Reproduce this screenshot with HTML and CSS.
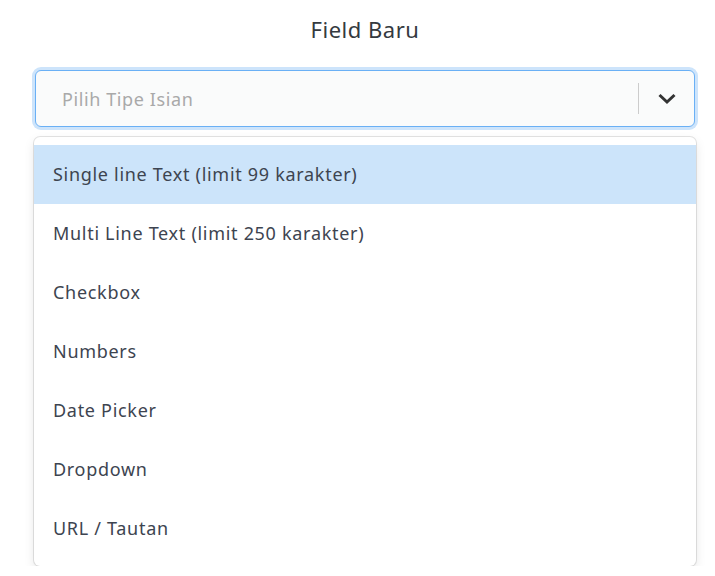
FILE: index.html
```html
<!DOCTYPE html>
<html lang="en">
  <head>
    <meta charset="UTF-8" />
    <meta name="viewport" content="width=device-width, initial-scale=1.0" />
    <title>Field Baru</title>
    <link rel="stylesheet" href="styles.css">
  </head>
  <body>
    <div class="field-form">
      <h1>Field Baru</h1>

      <div class="select-control">
        <div class="select-value">Pilih Tipe Isian</div>
        <span class="select-separator"></span>
        <div class="select-indicator">
          <svg width="20" height="20" viewBox="0 0 20 20">
            <path d="M2.5 6 L10 13 L17.5 6" fill="none" stroke="#333" stroke-width="3" />
          </svg>
        </div>
      </div>

      <ul class="select-menu">
        <li class="option option-focused">Single line Text (limit 99 karakter)</li>
        <li class="option">Multi Line Text (limit 250 karakter)</li>
        <li class="option">Checkbox</li>
        <li class="option">Numbers</li>
        <li class="option">Date Picker</li>
        <li class="option">Dropdown</li>
        <li class="option">URL / Tautan</li>
      </ul>
    </div>
  </body>
</html>
```

FILE: styles.css
```css
* {
  margin: 0;
  padding: 0;
  box-sizing: border-box;
  font-family: "Noto Sans", sans-serif;
}

body {
  background-color: #fff;
}

.field-form {
  width: 660px;
  margin-left: 35px;
  padding-top: 14px;
}

h1 {
  text-align: center;
  font-size: 22px;
  font-weight: 400;
  letter-spacing: 0.5px;
  color: #343a40;
  line-height: 30px;
  margin-bottom: 26px;
}

.select-control {
  display: flex;
  align-items: center;
  height: 57px;
  background-color: #fafbfb;
  border: 1px solid #6ab0f5;
  border-radius: 6px;
  box-shadow: 0 0 0 3px #cde4fb;
}

.select-value {
  flex: 1;
  padding-left: 26px;
  font-size: 18px;
  letter-spacing: 0.6px;
  color: #a9a9a9;
}

.select-separator {
  width: 1px;
  height: 31px;
  margin-right: 1px;
  background-color: #ccc;
}

.select-indicator {
  width: 54px;
  display: flex;
  justify-content: center;
  align-items: center;
}

.select-menu {
  list-style: none;
  margin: 10px -1px 0;
  padding: 8px 0;
  background-color: #fff;
  border-radius: 6px;
  box-shadow: 0 0 0 1px rgba(0, 0, 0, 0.1), 0 4px 11px rgba(0, 0, 0, 0.1);
}

.option {
  height: 59px;
  line-height: 59px;
  padding-left: 19px;
  font-size: 18px;
  letter-spacing: 0.7px;
  color: #3d4450;
}

.option-focused {
  background-color: #cce4fa;
}
```
